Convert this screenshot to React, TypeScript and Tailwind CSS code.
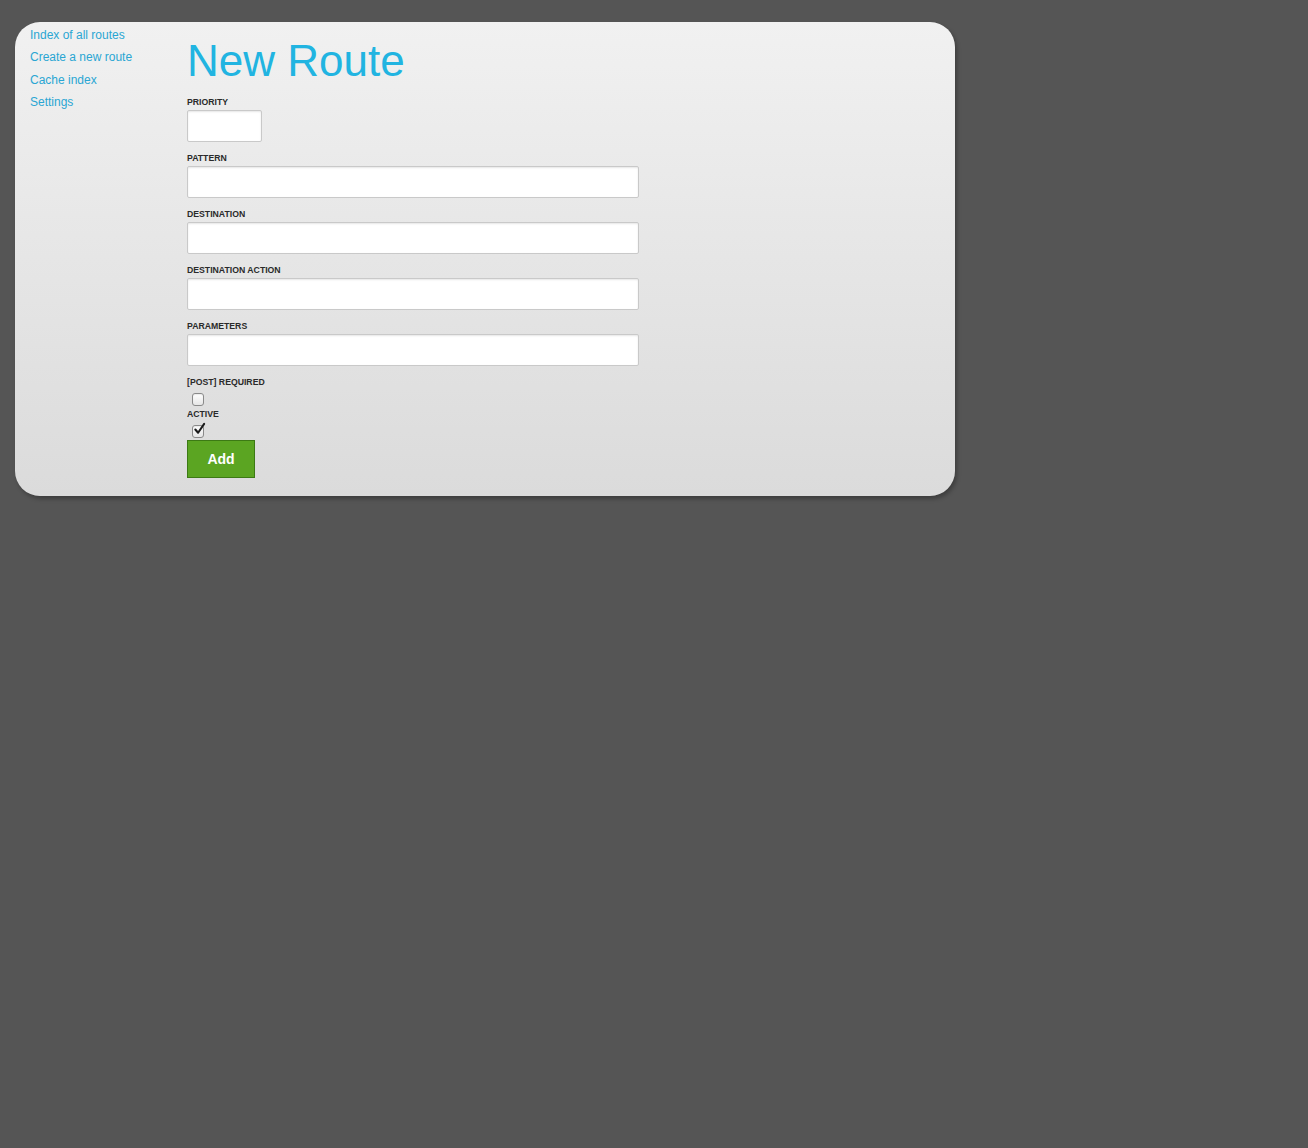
import React from "react";

const fields = [
  { label: "PATTERN" },
  { label: "DESTINATION" },
  { label: "DESTINATION ACTION" },
  { label: "PARAMETERS" },
];

function Check({ checked }: { checked?: boolean }) {
  return (
    <span className="relative ml-[5px] mt-[5px] block h-[13px] w-[12px]">
      <input
        type="checkbox"
        defaultChecked={checked}
        className="peer block h-[13px] w-[12px] appearance-none rounded-[3px] border border-[#8a8a8a] bg-gradient-to-b from-[#ffffff] to-[#e6e6e6] shadow-[inset_0_1px_1px_rgba(0,0,0,0.08)]"
      />
      {checked && (
        <svg
          viewBox="0 0 14 14"
          className="pointer-events-none absolute left-[1px] top-[-3px] h-[14px] w-[13px]"
        >
          <path
            d="M2.5 7.5 L5.5 11 L12 1.5"
            fill="none"
            stroke="#1a1a1a"
            strokeWidth="2.2"
            strokeLinecap="round"
            strokeLinejoin="round"
          />
        </svg>
      )}
    </span>
  );
}

export default function App() {
  return (
    <div
      className="min-h-screen bg-[#555555] pl-[15px] pt-[22px]"
      style={{ fontFamily: '"Liberation Sans", Arial, Helvetica, sans-serif' }}
    >
      <div className="flex h-[474px] w-[940px] rounded-[25px] bg-gradient-to-b from-[#f1f1f1] to-[#dbdbdb] pl-[15px] shadow-[2px_3px_4px_rgba(0,0,0,0.28)]">
        <nav className="w-[157px] pt-[1.5px]">
          <ul className="text-[12px] leading-[22.5px] text-[#2aa6d3]">
            <li><a href="#">Index of all routes</a></li>
            <li><a href="#">Create a new route</a></li>
            <li><a href="#">Cache index</a></li>
            <li><a href="#">Settings</a></li>
          </ul>
        </nav>
        <main className="pt-[17px]">
          <h1 className="text-[44px] leading-[44px] text-[#21b4e1]">New Route</h1>
          <form className="mt-[13px] flex flex-col">
            <label className="block text-[8.7px] font-bold leading-[12px] text-[#2a2a2a]">PRIORITY</label>
            <input
              type="text"
              className="mt-[2px] block h-[32px] w-[75px] rounded-[2px] border border-[#c9c9c9] bg-white shadow-[inset_0_1px_2px_rgba(0,0,0,0.1)]"
            />
            {fields.map((f) => (
              <div key={f.label} className="mt-[10px]">
                <label className="block text-[8.7px] font-bold leading-[12px] text-[#2a2a2a]">{f.label}</label>
                <input
                  type="text"
                  className="mt-[2px] block h-[32px] w-[452px] rounded-[2px] border border-[#c9c9c9] bg-white shadow-[inset_0_1px_2px_rgba(0,0,0,0.1)]"
                />
              </div>
            ))}
            <div className="mt-[10px]">
              <label className="block text-[8.7px] font-bold leading-[12px] text-[#2a2a2a]">[POST] REQUIRED</label>
              <Check />
            </div>
            <div className="mt-[2px]">
              <label className="block text-[8.7px] font-bold leading-[12px] text-[#2a2a2a]">ACTIVE</label>
              <Check checked />
            </div>
            <button
              type="button"
              className="mt-[2px] h-[38px] w-[68px] border border-[#3c7a14] bg-[#5ba522] text-[14px] font-bold text-white"
            >
              Add
            </button>
          </form>
        </main>
      </div>
    </div>
  );
}
